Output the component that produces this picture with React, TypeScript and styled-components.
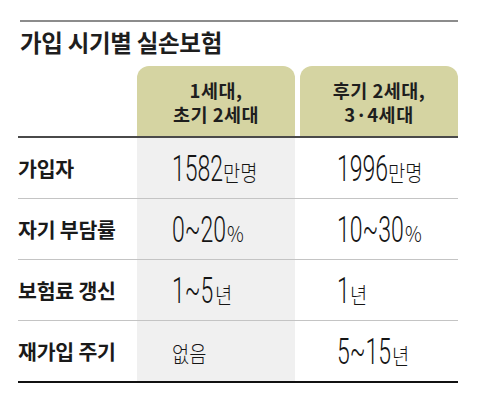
import * as React from "react";
import styled, { createGlobalStyle } from "styled-components";

interface Value {
    num?: string;
    unit?: string;
}

interface RowData {
    label: string;
    first: Value;
    second: Value;
}

const rows: RowData[] = [
    { label: "가입자", first: { num: "1582", unit: "만명" }, second: { num: "1996", unit: "만명" } },
    { label: "자기 부담률", first: { num: "0~20", unit: "%" }, second: { num: "10~30", unit: "%" } },
    { label: "보험료 갱신", first: { num: "1~5", unit: "년" }, second: { num: "1", unit: "년" } },
    { label: "재가입 주기", first: { unit: "없음" }, second: { num: "5~15", unit: "년" } },
];

// digits use a light face squeezed sideways to look like a condensed one
const NUM_SIZE = 36;
const NUM_SCALE = 0.64;
const DIGIT_EM = 0.562;

export default function App(): React.ReactElement {
    return (
        <>
            <GlobalStyle />
            <Wrapper>
                <TopRule />
                <Title>가입 시기별 실손보험</Title>
                <HeaderRow>
                    <span />
                    <HeadCell>
                        <HeadLine>1세대,</HeadLine>
                        <HeadLine>초기 2세대</HeadLine>
                    </HeadCell>
                    <HeadCell $offset>
                        <HeadLine>후기 2세대,</HeadLine>
                        <HeadLine>3·4세대</HeadLine>
                    </HeadCell>
                </HeaderRow>
                {rows.map((row, i) => (
                    <Row key={row.label} $last={i === rows.length - 1}>
                        <Label>{row.label}</Label>
                        <Cell $shaded>
                            <ValueView value={row.first} />
                        </Cell>
                        <Cell>
                            <ValueView value={row.second} />
                        </Cell>
                    </Row>
                ))}
            </Wrapper>
        </>
    );
}

function ValueView({ value }: { value: Value }) {
    return (
        <ValueText>
            {value.num && <Num $chars={value.num.length}>{value.num}</Num>}
            {value.unit && <Unit>{value.unit}</Unit>}
        </ValueText>
    );
}

const GlobalStyle = createGlobalStyle`
    html, body {
        margin: 0;
        padding: 0;
        background: #ffffff;
    }
    body {
        font-family: "Noto Sans CJK KR", "Noto Sans", sans-serif;
        color: #222222;
    }
`;

const Wrapper = styled.div`
    width: 440px;
    padding: 20px 0 0 18px;
`;

const TopRule = styled.div`
    margin-left: 2px;
    height: 2px;
    background: #8c8c8c;
`;

const Title = styled.h1`
    margin: 6px 0 10px 2px;
    font-size: 23.5px;
    line-height: 28px;
    font-weight: 700;
    letter-spacing: -0.3px;
    color: #1e1e1e;
`;

const HeaderRow = styled.div`
    display: grid;
    grid-template-columns: 119px 158px 163px;
    height: 70px;
    border-bottom: 2px solid #4a4a4a;
`;

const HeadCell = styled.div<{ $offset?: boolean }>`
    margin-left: ${(p) => (p.$offset ? "5px" : "0")};
    background: #d5d4a2;
    border-radius: 12px 12px 0 0;
    display: flex;
    flex-direction: column;
    align-items: center;
    justify-content: center;
    padding-top: 2px;
`;

const HeadLine = styled.div`
    font-size: 18.5px;
    line-height: 24px;
    height: 24px;
    font-weight: 700;
    letter-spacing: 0.5px;
    white-space: nowrap;
    color: #1e1e1e;
`;

const Row = styled.div<{ $last?: boolean }>`
    display: grid;
    grid-template-columns: 119px 158px 163px;
    height: 60px;
    border-bottom: ${(p) => (p.$last ? "2px solid #111111" : "1px solid #c4c4c4")};
`;

const Label = styled.div`
    display: flex;
    align-items: center;
    font-size: 20.5px;
    font-weight: 700;
    letter-spacing: -0.2px;
    white-space: nowrap;
    color: #1a1a1a;
`;

const Cell = styled.div<{ $shaded?: boolean }>`
    display: flex;
    align-items: center;
    padding-left: ${(p) => (p.$shaded ? "35px" : "42px")};
    background: ${(p) => (p.$shaded ? "#f0f0f0" : "transparent")};
`;

const ValueText = styled.span`
    display: inline-flex;
    align-items: baseline;
    white-space: nowrap;
    color: #151515;
    padding-top: 2px;
`;

const Num = styled.span<{ $chars: number }>`
    display: inline-block;
    font-family: Roboto, Lato, "Liberation Sans", sans-serif;
    font-weight: 300;
    font-size: ${NUM_SIZE}px;
    line-height: 1;
    transform: scaleX(${NUM_SCALE});
    transform-origin: left center;
    margin-right: ${(p) => -(1 - NUM_SCALE) * DIGIT_EM * NUM_SIZE * p.$chars}px;
`;

const Unit = styled.span`
    display: inline-block;
    font-family: "Noto Sans CJK KR", sans-serif;
    font-weight: 300;
    font-size: 22px;
    line-height: 1;
    transform: scaleX(0.85);
    transform-origin: left center;
`;
